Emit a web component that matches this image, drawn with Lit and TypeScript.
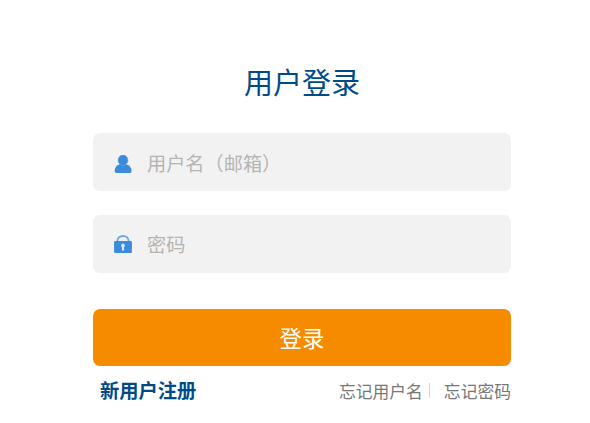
import { LitElement, html, css, svg } from "lit";
import { customElement, property } from "lit/decorators.js";

const userIcon = svg`
  <path d="M5.6 9.2H12.4C15.4 10.4 17.6 12.8 17.6 15.8Q17.6 18 15.6 18H2.6Q0.6 18 0.6 15.8C0.6 12.8 2.6 10.4 5.6 9.2Z" />
  <ellipse cx="9" cy="5.2" rx="5" ry="5.3" stroke="#74abe4" stroke-width="0.5" />`;

const lockIcon = svg`
  <path d="M3.4 7V5.9C3.4 2.9 5.9 1 9 1S14.6 2.9 14.6 5.9V7" fill="none" stroke="#74aae4" stroke-width="1.9" />
  <rect x="0.1" y="6" width="17.8" height="12" rx="1" />
  <path d="M9 8.5a2 2 0 0 1 1.1 3.6V15.6H7.9V12.1a2 2 0 0 1 1.1-3.6Z" fill="#d9e6f3" />`;

@customElement("login-field")
class LoginField extends LitElement {
  @property() icon = "user";
  @property() label = "";

  static styles = css`
    :host { display: block; }
    .field {
      display: flex;
      align-items: center;
      box-sizing: border-box;
      height: 58px;
      padding-left: 21px;
      border-radius: 7px;
      background: #f2f2f2;
    }
    .lock { padding-bottom: 3px; }
    svg { width: 18px; height: 18px; flex: none; fill: #3a8bdc; margin-top: 3px; }
    input {
      flex: 1;
      min-width: 0;
      height: 40px;
      margin: 2px 0 0 15px;
      padding: 0;
      border: 0;
      outline: 0;
      background: none;
      font: 400 19.2px "Noto Sans CJK SC", sans-serif;
    }
    input::placeholder { color: #b4b4b4; opacity: 1; }
  `;

  render() {
    return html`<label class="field ${this.icon}">
      <svg viewBox="0 0 18 18">${this.icon === "user" ? userIcon : lockIcon}</svg>
      <input type=${this.icon === "user" ? "text" : "password"} placeholder=${this.label} />
    </label>`;
  }
}

@customElement("app-root")
class AppRoot extends LitElement {
  static styles = css`
    :host {
      display: block;
      height: 423px;
      overflow: hidden;
      background: #fff;
      font-family: "Noto Sans CJK SC", sans-serif;
    }
    .login { width: 418px; margin-left: 93px; padding-top: 61px; }
    .title {
      margin: 0 0 32px;
      height: 40px;
      line-height: 40px;
      text-align: center;
      font-size: 29px;
      font-weight: 400;
      color: #004b87;
    }
    .fields { display: grid; gap: 24px; }
    .submit {
      display: block;
      width: 100%;
      height: 57px;
      margin-top: 36px;
      padding: 0 0 2px;
      border: 0;
      border-radius: 7px;
      background: #f68b00;
      color: #fff;
      font: 400 22.4px "Noto Sans CJK SC", sans-serif;
    }
    .links {
      display: flex;
      align-items: center;
      height: 49px;
      padding-left: 7px;
      font-size: 16.8px;
      font-weight: 400;
      color: #777;
      white-space: nowrap;
    }
    .register {
      margin-right: auto;
      padding-bottom: 2px;
      font-size: 19.3px;
      font-weight: 700;
      color: #004b87;
    }
    .divider { width: 1px; height: 15px; margin: 0 14px 0 6px; background: #d8d4dc; }
  `;

  render() {
    return html`<form class="login">
      <h1 class="title">用户登录</h1>
      <div class="fields">
        <login-field icon="user" label="用户名（邮箱）"></login-field>
        <login-field icon="lock" label="密码"></login-field>
      </div>
      <button class="submit" type="button">登录</button>
      <div class="links">
        <span class="register">新用户注册</span>
        <span>忘记用户名</span>
        <span class="divider"></span>
        <span>忘记密码</span>
      </div>
    </form>`;
  }
}
